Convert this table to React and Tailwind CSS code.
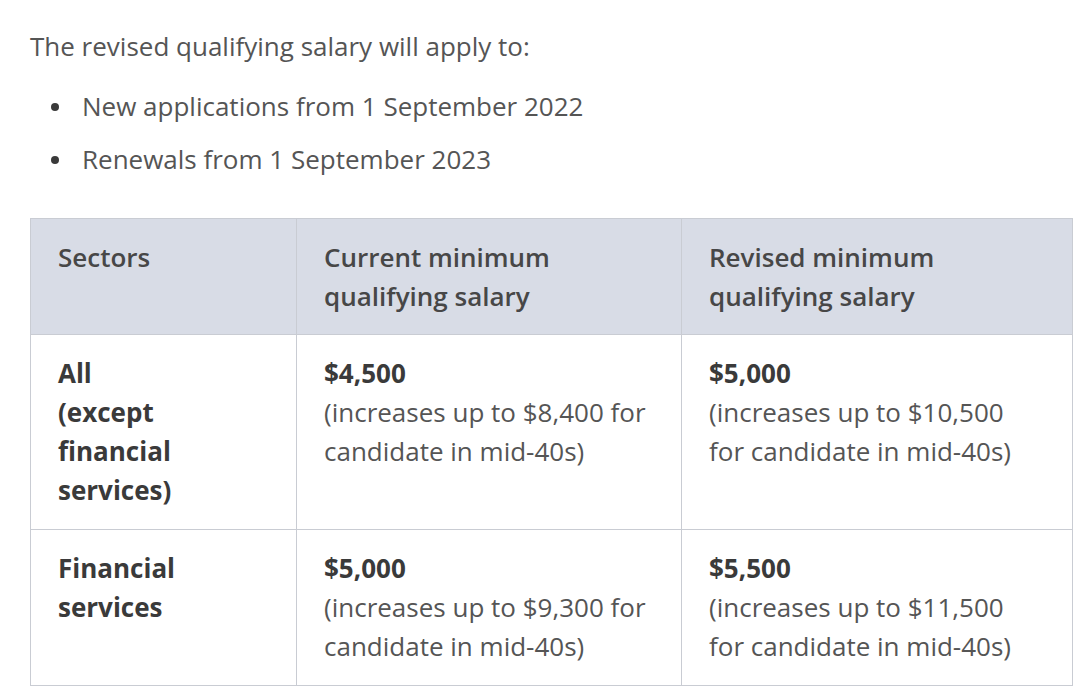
export default function App() {
  const rows = [
    {
      sector: ['All', '(except', 'financial', 'services)'],
      current: ['$4,500', '(increases up to $8,400 for', 'candidate in mid-40s)'],
      revised: ['$5,000', '(increases up to $10,500', 'for candidate in mid-40s)'],
    },
    {
      sector: ['Financial', 'services'],
      current: ['$5,000', '(increases up to $9,300 for', 'candidate in mid-40s)'],
      revised: ['$5,500', '(increases up to $11,500', 'for candidate in mid-40s)'],
    },
  ];

  const lines = (arr) =>
    arr.map((t, i) => (
      <span key={i}>
        {i > 0 && <br />}
        {t}
      </span>
    ));

  const cell = 'border border-[#c9ccd3] px-[27px] pt-[19px] align-top text-left leading-[39px]';

  return (
    <div
      className="min-h-screen bg-white pl-[30px] pt-[27px] text-[#555555] text-[26px] leading-[39px]"
      style={{ fontFamily: '"Open Sans", "Noto Sans", sans-serif' }}
    >
      <p>The revised qualifying salary will apply to:</p>

      <ul className="mt-[21px] flex flex-col gap-[14px]">
        <li className="flex items-center">
          <span className="ml-[21px] w-[8px] h-[8px] rounded-full bg-[#3a3a3a]" />
          <span className="ml-[23px]">New applications from 1 September 2022</span>
        </li>
        <li className="flex items-center">
          <span className="ml-[21px] w-[8px] h-[8px] rounded-full bg-[#3a3a3a]" />
          <span className="ml-[23px]">Renewals from 1 September 2023</span>
        </li>
      </ul>

      <table className="mt-[39px] border-collapse w-[1042px] table-fixed">
        <colgroup>
          <col className="w-[266px]" />
          <col className="w-[385px]" />
          <col className="w-[391px]" />
        </colgroup>
        <thead>
          <tr className="bg-[#d8dce6] text-[#474747]">
            <th className={`${cell} pb-[18px] font-semibold`}>Sectors</th>
            <th className={`${cell} pb-[18px] font-semibold`}>{lines(['Current minimum', 'qualifying salary'])}</th>
            <th className={`${cell} pb-[18px] font-semibold`}>{lines(['Revised minimum', 'qualifying salary'])}</th>
          </tr>
        </thead>
        <tbody>
          {rows.map((r, i) => (
            <tr key={i}>
              <td className={`${cell} pb-[19px] font-bold text-[#3a3a3a]`}>{lines(r.sector)}</td>
              <td className={`${cell} pb-[19px]`}>
                <span className="font-bold text-[#3a3a3a]">{r.current[0]}</span>
                <br />
                {lines(r.current.slice(1))}
              </td>
              <td className={`${cell} pb-[19px]`}>
                <span className="font-bold text-[#3a3a3a]">{r.revised[0]}</span>
                <br />
                {lines(r.revised.slice(1))}
              </td>
            </tr>
          ))}
        </tbody>
      </table>
    </div>
  );
}
